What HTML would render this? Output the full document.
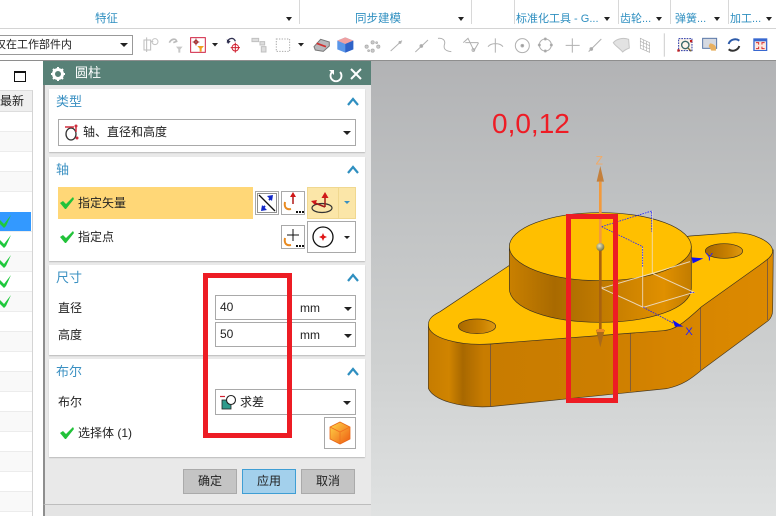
<!DOCTYPE html>
<html><head><meta charset="utf-8">
<style>
html,body{margin:0;padding:0}
body{width:776px;height:516px;overflow:hidden;position:relative;background:#fff;font-family:"Liberation Sans","Noto Sans CJK SC",sans-serif;font-size:12px;color:#222}
.a{position:absolute;box-sizing:border-box}
.t{position:absolute;white-space:nowrap;line-height:16px}
.rb{color:#2f8fc0;font-size:11.5px;top:11px}
.dv{position:absolute;top:0;height:24px;width:1px;background:#d8d8d8}
.sec{position:absolute;left:49px;width:316px;background:#fff;box-shadow:0 1px 1px #bbb}
.h{color:#3a90c2;font-size:13px}
.box{position:absolute;box-sizing:border-box;background:#fff;border:1px solid #a9a9a9}
.btn{position:absolute;box-sizing:border-box;top:469px;width:54px;height:25px;background:#c4c4c4;border:1px solid #aaa;text-align:center;line-height:23px;font-size:12px;color:#222}
</style></head><body>

<!-- ribbon -->
<div class="a" style="left:0;top:28px;width:776px;height:1px;background:#d4d4d4"></div>
<div class="dv" style="left:299px"></div><div class="dv" style="left:471px"></div><div class="dv" style="left:514px"></div><div class="dv" style="left:618px"></div><div class="dv" style="left:670px"></div><div class="dv" style="left:728px"></div>
<div class="t rb" style="left:95px">特征</div>
<div class="t rb" style="left:355px">同步建模</div>
<div class="t rb" style="left:516px;font-size:11px">标准化工具 - G...</div>
<div class="t rb" style="left:620px;font-size:11px">齿轮...</div>
<div class="t rb" style="left:675px;font-size:11px">弹簧...</div>
<div class="t rb" style="left:730px;font-size:11px">加工...</div>

<!-- selection combo -->
<div class="box" style="left:-4px;top:35px;width:137px;height:20px;border-color:#999"></div>
<div class="t" style="left:-5px;top:37px;font-size:11px;color:#222">仅在工作部件内</div>

<!-- viewport -->
<div class="a" style="left:371px;top:61px;width:405px;height:455px;background:linear-gradient(#b2b3b5 0%,#bfc1c2 30%,#d0d2d2 70%,#e0e2e2 100%)"></div>
<div class="a" style="left:0;top:60px;width:776px;height:1px;background:#8e8e8e"></div>
<div class="t" style="left:492px;top:107px;font-size:28px;line-height:34px;color:#ee1c25;font-family:'Liberation Sans',sans-serif">0,0,12</div>

<!-- model & icons -->
<svg class="a" style="left:0;top:0" width="776" height="516" viewBox="0 0 776 516" xmlns="http://www.w3.org/2000/svg">
<defs>
<linearGradient id="w1" x1="0" x2="1" y1="0" y2="0"><stop offset="0" stop-color="#c67c00"/><stop offset=".06" stop-color="#d08400"/><stop offset=".1" stop-color="#a86800"/><stop offset=".16" stop-color="#c87c00"/><stop offset=".5" stop-color="#cc7e00"/><stop offset=".7" stop-color="#d68400"/><stop offset="1" stop-color="#dc8a00"/></linearGradient>
<linearGradient id="w2" x1="0" x2="1" y1="0" y2="0"><stop offset="0" stop-color="#c98000"/><stop offset=".25" stop-color="#a96a00"/><stop offset=".6" stop-color="#c98000"/><stop offset=".85" stop-color="#e09000"/><stop offset="1" stop-color="#c27c00"/></linearGradient>
<linearGradient id="hole" x1="0" x2="1" y1="0" y2="0"><stop offset="0" stop-color="#a86800"/><stop offset=".6" stop-color="#c88000"/><stop offset="1" stop-color="#e09a10"/></linearGradient>
<linearGradient id="cb" x1="0" x2="1" y1="0" y2="1"><stop offset="0" stop-color="#ffd84a"/><stop offset="1" stop-color="#ee5a10"/></linearGradient>
<radialGradient id="ball" cx=".4" cy=".35" r=".7"><stop offset="0" stop-color="#e8e6c0"/><stop offset="1" stop-color="#6d6a3a"/></radialGradient>
</defs>

<g transform="translate(420 150) scale(.3333)">
 <!-- side walls -->
 <path d="M25 525 L25 715 C40 750 120 775 212 770 L740 716 C790 705 815 685 845 660 L1045 512 C1056 502 1058 490 1058 480 L1060 300 L840 470 L640 540 L210 582 L60 560Z" fill="url(#w1)" stroke="#4a3a20" stroke-width="2"/>
 <path d="M212 582V770M631 540V724M842 472V660M1043 328V510" stroke="#5a4a50" stroke-width="2" fill="none"/>
 <!-- top face -->
 <path d="M25 525 C25 505 40 495 60 485 L270 345 L810 258 L945 248 C1000 248 1060 275 1058 305 C1056 320 1040 330 1020 345 L845 470 C800 510 770 540 730 542 L210 582 C120 588 25 565 25 525Z" fill="#ffbf00" stroke="#3a3020" stroke-width="2"/>
 <!-- holes -->
 <ellipse cx="171" cy="529" rx="56" ry="22" fill="url(#hole)" stroke="#3a3020" stroke-width="2"/>
 <ellipse cx="912" cy="303" rx="56" ry="22" fill="url(#hole)" stroke="#3a3020" stroke-width="2"/>
 <!-- boss -->
 <path d="M268 290V415C268 475 390 517 540 517C690 517 814 475 814 415V290Z" fill="url(#w2)" stroke="#3a3020" stroke-width="2"/>
 <ellipse cx="541" cy="290" rx="273" ry="102" fill="#ffbf00" stroke="#3a3020" stroke-width="2"/>
 <!-- csys -->
 <path d="M668 290V470M697 183V370" stroke="#f0e0c8" stroke-width="3" fill="none" opacity=".8"/>
 <path d="M545 415L670 472L822 427L697 370ZM697 370L810 335M548 415L545 410" stroke="#eee4d8" stroke-width="3" fill="none" opacity=".85"/>
 <path d="M545 230L695 183V245M545 230L668 290V350" stroke="#2b2bff" stroke-width="2.5" stroke-dasharray="5 3" fill="none"/>
 <path d="M670 472L770 525M810 427L825 428" stroke="#1b1bff" stroke-width="2.5" stroke-dasharray="5 3" fill="none"/>
 <path d="M790 530L758 510L765 530Z" fill="#1010ee"/>
 <path d="M850 325L815 322L818 340Z" fill="#1010ee"/>
 <text x="796" y="555" font-size="34" fill="#2222ff" font-family="Liberation Sans">X</text>
 <text x="857" y="332" font-size="34" fill="#2222ff" font-family="Liberation Sans">Y</text>
 <!-- vector -->
 <path d="M541 95V280" stroke="#f29a3c" stroke-width="8" fill="none"/>
 <path d="M541 48L530 95H552Z" fill="#c4803c"/>
 <text x="527" y="44" font-size="36" fill="#f1ab68" font-family="Liberation Sans">Z</text>
 <path d="M541 300V540" stroke="#a9620f" stroke-width="8" fill="none"/>
 <path d="M528 540H554L541 592Z" fill="#aa6a1a"/>
 <rect x="530" y="537" width="22" height="9" fill="#ef8a20"/>
 <circle cx="541" cy="291" r="12" fill="url(#ball)"/>
</g>

<!-- ribbon triangles -->
<g fill="#222">
 <path d="M286 17h6l-3 4z M458 17h6l-3 4z M604 17h6l-3 4z M656 17h6l-3 4z M714 17h6l-3 4z M766 17h6l-3 4z"/>
 <path d="M120 43h8l-4 4z M212 43h6l-3 3.500z M298 43h6l-3 3.500z"/>
</g>

<!-- toolbar left -->
<g transform="scale(.3333)" fill="none" stroke-width="3">
 <path d="M432 120h20v30h-20zM452 125h8M440 112v44" stroke="#bdbdbd"/><circle cx="465" cy="125" r="9" stroke="#c4c4c4"/>
 <path d="M508 128c6-12 20-14 22-4l-10 4" stroke="#bbb" stroke-width="5"/><path d="M528 140h20l-7 8v10h-6v-10z" fill="#c8c8c8"/>
 <rect x="572" y="113" width="44" height="44" stroke="#d02040" stroke-width="3" fill="#fff"/>
 <path d="M588 116v20M578 126h20" stroke="#8a3030"/><circle cx="588" cy="126" r="5" stroke="#b03030"/>
 <path d="M592 138h20l-7 8v9h-6v-9z" fill="#f0a020"/>
 <path d="M682 128c2-14 20-18 24-4" stroke="#303050" stroke-width="4"/><path d="M680 118l4 14 8-8z" fill="#303050"/>
 <circle cx="706" cy="143" r="10" stroke="#d02030"/><path d="M706 128v30M692 143h28" stroke="#d02030"/>
 <path d="M756 115h20v10h-20zM780 125h14v10h-14zM784 140h14v16h-14z" stroke="#c0c0c0" fill="#ddd"/>
 <rect x="829" y="117" width="40" height="37" stroke="#aaa" stroke-dasharray="4 4"/>
 <path d="M942 140l20-22 26 8v12l-18 16-24-4z" fill="#b8b8bc" stroke="#777"/><path d="M950 130l28 10" stroke="#d03030" stroke-width="5"/>
 <path d="M1012 122l24-10 24 10v26l-24 10-24-10z" fill="#5a96e8"/><path d="M1012 122l24-10 24 10-24 10z" fill="#f0a0a0"/><path d="M1036 132l24-10v26l-24 10z" fill="#2f62c8"/>
 <g fill="#c8c8c8" stroke="#aaa" stroke-width="2"><circle cx="1100" cy="140" r="5"/><circle cx="1118" cy="127" r="5"/><circle cx="1135" cy="140" r="5"/><circle cx="1118" cy="152" r="5"/><circle cx="1106" cy="152" r="3"/><circle cx="1130" cy="128" r="3"/></g>
</g>
<!-- toolbar right -->
<g transform="translate(388 0) scale(.3333)" fill="none" stroke="#b0b0b0" stroke-width="3">
 <path d="M8 153L42 122"/><circle cx="36" cy="127" r="3" fill="#aaa"/>
 <path d="M82 156L120 120"/><circle cx="100" cy="138" r="4" fill="#aaa"/>
 <path d="M150 115c14-2 22 6 20 16c-4 12-2 22 20 24"/>
 <path d="M226 128L240 115L258 152L272 128M232 128H270"/><circle cx="256" cy="150" r="4"/>
 <path d="M322 115V158M300 140C310 128 335 128 345 140"/>
 <circle cx="403" cy="137" r="21"/><circle cx="403" cy="137" r="4" fill="#999"/>
 <circle cx="472" cy="135" r="18"/><circle cx="472" cy="117" r="3" fill="#999"/><circle cx="454" cy="135" r="3" fill="#999"/><circle cx="490" cy="135" r="3" fill="#999"/><circle cx="472" cy="153" r="3" fill="#999"/>
 <path d="M553 115V158M533 136H575"/>
 <path d="M602 155L640 117"/><circle cx="610" cy="147" r="4" fill="#aaa"/>
 <path d="M676 128c10-12 30-16 46-10l2 26c-10 4-16 8-20 12c-8-10-24-20-28-28z" fill="#e2e2e2" stroke="#c4c4c4"/>
 <path d="M757 115L785 128V157L757 145ZM766 120V148M776 124V152M757 124L785 137M757 135L785 147" stroke-width="2"/>
 <path d="M829 100V170" stroke="#ccc" stroke-width="3"/>
 <rect x="872" y="116" width="40" height="36" stroke="#2838a8" stroke-dasharray="5 3" fill="#fdf4ea"/><circle cx="892" cy="135" r="11" stroke="#3a6a6a" stroke-width="4"/><path d="M900 144l10 10" stroke="#806a30" stroke-width="4"/><rect x="906" y="120" width="7" height="7" fill="#c02020" stroke="none"/><rect x="868" y="148" width="7" height="7" fill="#c02020" stroke="none"/>
 <rect x="944" y="115" width="42" height="30" stroke="#5a78a8" fill="#d6dae2"/><path d="M966 130c8 0 18 6 18 14v8h-14l-8-14z" fill="#e8b060" stroke="none"/>
 <path d="M1022 132c4-14 22-18 32-10" stroke="#2c5aa8" stroke-width="6"/><path d="M1054 138c-4 14-22 18-32 10" stroke="#333" stroke-width="6"/>
 <rect x="1096" y="115" width="42" height="38" stroke="none" fill="#3868d0"/><rect x="1100" y="124" width="34" height="26" stroke="none" fill="#fbe8e0"/><g stroke="#d83030" stroke-width="3"><path d="M1104 128h8v6M1130 128h-8v6M1104 146h8v-6M1130 146h-8v-6"/></g>
</g>
</svg>

<!-- left navigator -->
<div class="a" style="left:0;top:61px;width:43px;height:455px;background:#fff"></div>
<div class="a" style="left:14px;top:71px;width:12px;height:11px;border:1.500px solid #111;border-top-width:2.500px"></div>
<div class="a" style="left:0;top:90px;width:33px;height:426px;background:#fff;border-right:1px solid #d4d4d4;border-top:1px solid #ddd"></div>
<div class="a" style="left:0;top:91px;width:32px;height:21px;background:#efefef;border-bottom:1px solid #ddd"></div>
<div class="t" style="left:0;top:93px;font-size:12px">最新</div>
<svg class="a" style="left:0;top:112px" width="32" height="404" xmlns="http://www.w3.org/2000/svg">
 <g fill="#f9f9f9"><rect y="20" width="32" height="20"/><rect y="60" width="32" height="20"/><rect y="140" width="32" height="20"/><rect y="180" width="32" height="20"/><rect y="220" width="32" height="20"/><rect y="260" width="32" height="20"/><rect y="300" width="32" height="20"/><rect y="340" width="32" height="20"/><rect y="380" width="32" height="20"/></g>
 <g stroke="#ececec"><path d="M0 19.500h32M0 39.500h32M0 59.500h32M0 79.500h32M0 119.500h32M0 139.500h32M0 159.500h32M0 179.500h32M0 199.500h32M0 219.500h32M0 239.500h32M0 259.500h32M0 279.500h32M0 299.500h32M0 319.500h32M0 339.500h32M0 359.500h32M0 379.500h32M0 399.500h32"/></g>
 <rect y="100" width="31" height="19" fill="#3399ff"/>
 <g fill="#1fc83c"><path d="M0 108l4 4 7-9-5 11-2 2-4-4z"/><path d="M0 128l4 4 7-9-5 11-2 2-4-4z"/><path d="M0 148l4 4 7-9-5 11-2 2-4-4z"/><path d="M0 168l4 4 7-9-5 11-2 2-4-4z"/><path d="M0 188l4 4 7-9-5 11-2 2-4-4z"/></g>
</svg>

<!-- dialog -->
<div class="a" style="left:43px;top:61px;width:328px;height:444px;background:#e9e9e9;border-left:2px solid #8e8e8e;border-bottom:1px solid #bdbdbd"></div>
<div class="a" style="left:43px;top:505px;width:328px;height:11px;background:#e4e4e4;border-left:2px solid #8e8e8e"></div>
<div class="a" style="left:43px;top:61px;width:328px;height:24px;background:#588177"></div>
<div class="t" style="left:75px;top:65px;color:#fff;font-size:13px">圆柱</div>
<div class="sec" style="top:89px;height:63px"></div>
<div class="sec" style="top:157px;height:104px"></div>
<div class="sec" style="top:265px;height:90px"></div>
<div class="sec" style="top:359px;height:98px"></div>
<div class="t h" style="left:56px;top:94px">类型</div>
<div class="t h" style="left:56px;top:162px">轴</div>
<div class="t h" style="left:56px;top:270px">尺寸</div>
<div class="t h" style="left:56px;top:364px">布尔</div>

<div class="box" style="left:58px;top:119px;width:298px;height:27px"></div>
<div class="t" style="left:83px;top:124px">轴、直径和高度</div>

<div class="a" style="left:58px;top:187px;width:195px;height:32px;background:#ffd777"></div>
<div class="t" style="left:78px;top:195px">指定矢量</div>
<div class="t" style="left:78px;top:229px">指定点</div>
<div class="box" style="left:255px;top:191px;width:24px;height:24px"></div>
<div class="box" style="left:281px;top:191px;width:24px;height:24px"></div>
<div class="a" style="left:307px;top:187px;width:49px;height:32px;background:#fbe6a8;border:1px solid #f0d890"></div>
<div class="a" style="left:338px;top:188px;width:1px;height:30px;background:#f0d890"></div>
<div class="box" style="left:281px;top:225px;width:24px;height:24px"></div>
<div class="box" style="left:307px;top:221px;width:49px;height:32px"></div>

<div class="t" style="left:58px;top:300px">直径</div>
<div class="t" style="left:58px;top:327px">高度</div>
<div class="box" style="left:215px;top:295px;width:141px;height:25px"></div>
<div class="box" style="left:215px;top:322px;width:141px;height:25px"></div>
<div class="t" style="left:220px;top:299px">40</div>
<div class="t" style="left:220px;top:326px">50</div>
<div class="t" style="left:300px;top:300px;font-size:12px">mm</div>
<div class="t" style="left:300px;top:327px;font-size:12px">mm</div>

<div class="t" style="left:58px;top:394px">布尔</div>
<div class="box" style="left:215px;top:389px;width:141px;height:26px"></div>
<div class="t" style="left:240px;top:394px">求差</div>
<div class="t" style="left:78px;top:425px">选择体 (1)</div>
<div class="box" style="left:324px;top:417px;width:32px;height:32px"></div>

<div class="btn" style="left:183px">确定</div>
<div class="btn" style="left:242px;background:#a3d0ec;border-color:#3f9ed4">应用</div>
<div class="btn" style="left:301px">取消</div>

<svg class="a" style="left:0;top:0" width="776" height="516" xmlns="http://www.w3.org/2000/svg">
 <!-- title icons -->
 <circle cx="58" cy="74" r="4.500" fill="none" stroke="#fff" stroke-width="3"/>
 <path d="M58 67v3M58 78v3M51 74h3M62 74h3M53 69l2 2M61 77l2 2M63 69l-2 2M55 77l-2 2" stroke="#fff" stroke-width="2"/>
 <path d="M332 72a5.500 5.500 0 1 0 8 0" fill="none" stroke="#fff" stroke-width="1.800"/><path d="M329 70h5v5z" fill="#fff"/>
 <path d="M351 69l10 10M361 69l-10 10" stroke="#fff" stroke-width="2"/>
 <!-- chevrons -->
 <g fill="none" stroke="#2f8fc0" stroke-width="2.200"><path d="M348 105l5-6 5 6M348 173l5-6 5 6M348 281l5-6 5 6M348 375l5-6 5 6"/></g>
 <!-- combo arrows -->
 <g fill="#222"><path d="M343 131h8l-4 4zM344 236h6l-3 3zM344 307h8l-4 4zM344 334h8l-4 4zM343 401h8l-4 4z"/></g>
 <path d="M344 201h6l-3 3z" fill="#3a8fc0"/>
 <!-- type icon -->
 <ellipse cx="71" cy="134" rx="5" ry="6" fill="none" stroke="#333" stroke-width="1.300"/>
 <path d="M65 127h9" stroke="#d03040" stroke-width="1.500"/><path d="M76 126v6" stroke="#d03040" stroke-width="1.500"/><circle cx="76" cy="126" r="1.500" fill="#d03040"/><circle cx="77" cy="138" r="1.500" fill="#d03040"/>
 <!-- checks -->
 <g fill="#22c23a"><path d="M60 203l3-2 3 3 7-7 1 2-8 10h-1z"/><path d="M60 237l3-2 3 3 7-7 1 2-8 10h-1z"/><path d="M60 433l3-2 3 3 7-7 1 2-8 10h-1z"/></g>
 <!-- axis buttons -->
 <rect x="257.500" y="193.500" width="19" height="19" fill="none" stroke="#222" stroke-dasharray="1 1"/>
 <path d="M259 195l16 16" stroke="#111" stroke-width="1.300"/>
 <path d="M273 195l-6 1 5 5zM261 211l6-1-5-5z" fill="#1228c8"/><path d="M272 197l-3 3M262 209l3-3" stroke="#1228c8" stroke-width="2"/>
 <path d="M293 204v-9" stroke="#b01818" stroke-width="1.500"/><path d="M293 192l-3 5h6z" fill="#d01818"/>
 <path d="M285 202c-1 5 1 8 6 7" fill="none" stroke="#e88a20" stroke-width="2"/>
 <path d="M296 211h2v2h-2zM299 211h2v2h-2zM302 211h2v2h-2z" fill="#111"/>
 <path d="M293 241v-12M287 235h12" stroke="#111" stroke-width="1"/>
 <path d="M285 238c-1 5 1 8 6 7" fill="none" stroke="#e88a20" stroke-width="2"/>
 <path d="M296 245h2v2h-2zM299 245h2v2h-2zM302 245h2v2h-2z" fill="#111"/>
 <ellipse cx="322" cy="208" rx="10" ry="4.500" fill="none" stroke="#333" stroke-width="1.200"/>
 <path d="M325 207v-12" stroke="#a01818" stroke-width="1.500"/><path d="M325 192l-3.500 6h7z" fill="#d01818"/>
 <path d="M325 207l-10-4" stroke="#a01818" stroke-width="1.500"/><path d="M311 201l6-1-2 5z" fill="#d01818"/>
 <circle cx="323" cy="237" r="10" fill="none" stroke="#111" stroke-width="1.300"/>
 <path d="M323 233l1.200 2.800 2.800 1.200-2.800 1.200-1.200 2.800-1.200-2.800-2.800-1.200 2.800-1.200z" fill="#e01818"/>
 <!-- bool icon -->
 <rect x="222" y="400" width="9" height="9" fill="#2f9a8c" stroke="#222" stroke-width=".8"/>
 <circle cx="231" cy="400" r="4.500" fill="#fff" stroke="#222" stroke-width="1.100"/>
 <path d="M220 396.500h5" stroke="#d02030" stroke-width="1.200"/>
 <!-- cube -->
 <path d="M340 422l10 5v12l-10 5-10-5v-12z" fill="url(#cb)" stroke="#e86818" stroke-width=".8"/>
 <path d="M330 427l10 5 10-5M340 432v12" fill="none" stroke="#f07020" stroke-width=".8"/>
 <!-- red rectangles, on top of everything -->
 <rect x="568.500" y="216.500" width="47" height="184" fill="none" stroke="#ed1c24" stroke-width="5"/>
 <rect x="205.500" y="275.500" width="84" height="160" fill="none" stroke="#ed1c24" stroke-width="5"/>
</svg>
</body></html>
